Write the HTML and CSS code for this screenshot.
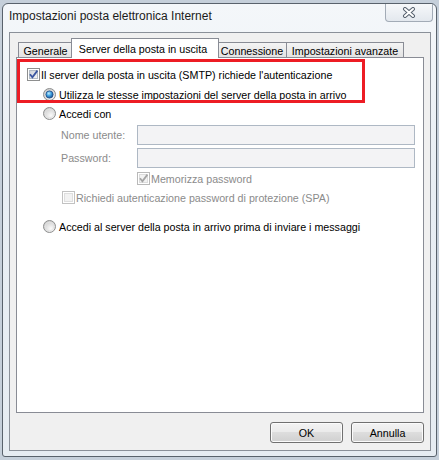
FILE: index.html
```html
<!DOCTYPE html>
<html lang="it">
<head>
<meta charset="utf-8">
<title>Impostazioni posta elettronica Internet</title>
<link rel="stylesheet" href="styles.css">
</head>
<body>
<svg class="defs" width="0" height="0" aria-hidden="true">
  <defs>
    <linearGradient id="cbfill" x1="0" y1="0" x2="1" y2="1">
      <stop offset="0" stop-color="#cdd2d9"/>
      <stop offset="1" stop-color="#f7f7f7"/>
    </linearGradient>
    <radialGradient id="rfill" cx="0.62" cy="0.68" r="0.75">
      <stop offset="0" stop-color="#fbfbfb"/>
      <stop offset="1" stop-color="#c9c9c9"/>
    </radialGradient>
    <radialGradient id="rdot" cx="0.4" cy="0.35" r="0.75">
      <stop offset="0" stop-color="#c4f0ff"/>
      <stop offset="0.45" stop-color="#3d9fe0"/>
      <stop offset="1" stop-color="#173f7a"/>
    </radialGradient>
    <symbol id="cb-on" viewBox="0 0 13 13">
      <rect x="0.5" y="0.5" width="12" height="12" fill="#fff" stroke="#8e8f8f"/>
      <rect x="2.5" y="2.5" width="8" height="8" fill="url(#cbfill)" stroke="#b4bcc6"/>
      <path d="M3 6.3 L5.4 9.3 L10.4 2.6" fill="none" stroke="#3b56a0" stroke-width="1.8"/>
    </symbol>
    <symbol id="cb-dis-on" viewBox="0 0 13 13">
      <rect x="0.5" y="0.5" width="12" height="12" fill="#fff" stroke="#b9b9b9"/>
      <rect x="2.5" y="2.5" width="8" height="8" fill="#f2f2f2" stroke="#dcdcdc"/>
      <path d="M3 6.3 L5.4 9.3 L10.4 2.6" fill="none" stroke="#a4a4a4" stroke-width="1.8"/>
    </symbol>
    <symbol id="cb-dis-off" viewBox="0 0 13 13">
      <rect x="0.5" y="0.5" width="12" height="12" fill="#fff" stroke="#c2c2c2"/>
      <rect x="2.5" y="2.5" width="8" height="8" fill="#f2f2f2" stroke="#dedede"/>
    </symbol>
    <symbol id="rb-on" viewBox="0 0 13 13">
      <circle cx="6.5" cy="6.5" r="6" fill="url(#rfill)" stroke="#8e8f8f"/>
      <circle cx="6.5" cy="6.5" r="3.6" fill="url(#rdot)" stroke="#1d4b86" stroke-width="0.8"/>
    </symbol>
    <symbol id="rb-off" viewBox="0 0 13 13">
      <circle cx="6.5" cy="6.5" r="6" fill="url(#rfill)" stroke="#8e8f8f"/>
      <circle cx="6.5" cy="6.5" r="4.2" fill="none" stroke="#e2e2e2" stroke-width="0.8"/>
    </symbol>
  </defs>
</svg>

<div class="window">
  <div class="titlebar">
    <span class="title">Impostazioni posta elettronica Internet</span>
    <div class="close">
      <svg width="14" height="11" viewBox="0 0 14 11">
        <path d="M3 2 L11 9 M11 2 L3 9" stroke="#56616e" stroke-width="4" stroke-linecap="round"/>
        <path d="M3 2 L11 9 M11 2 L3 9" stroke="#ffffff" stroke-width="2" stroke-linecap="round"/>
      </svg>
    </div>
  </div>

  <div class="client">
    <div class="tabs">
      <div class="tab t-gen">Generale</div>
      <div class="tab active">Server della posta in uscita</div>
      <div class="tab t-conn">Connessione</div>
      <div class="tab t-adv">Impostazioni avanzate</div>
    </div>

    <div class="panel">
      <div class="highlight"></div>

      <div class="row">
        <svg class="ctl"><use href="#cb-on"/></svg>
        <span class="txt gap1">Il server della posta in uscita (SMTP) richiede l'autenticazione</span>
      </div>

      <div class="row ind-radio r2">
        <svg class="ctl"><use href="#rb-on"/></svg>
        <span class="txt gap3">Utilizza le stesse impostazioni del server della posta in arrivo</span>
      </div>

      <div class="row ind-radio r3">
        <svg class="ctl"><use href="#rb-off"/></svg>
        <span class="txt gap3">Accedi con</span>
      </div>

      <div class="row frow r4">
        <span class="lbl">Nome utente:</span>
        <div class="field"></div>
      </div>

      <div class="row frow r5">
        <span class="lbl">Password:</span>
        <div class="field"></div>
      </div>

      <div class="row ind-mem r6">
        <svg class="ctl"><use href="#cb-dis-on"/></svg>
        <span class="txt gap1 dis">Memorizza password</span>
      </div>

      <div class="row ind-spa r7">
        <svg class="ctl"><use href="#cb-dis-off"/></svg>
        <span class="txt gap1 dis">Richiedi autenticazione password di protezione (SPA)</span>
      </div>

      <div class="row ind-radio r8">
        <svg class="ctl"><use href="#rb-off"/></svg>
        <span class="txt gap3">Accedi al server della posta in arrivo prima di inviare i messaggi</span>
      </div>
    </div>

    <div class="buttons">
      <button class="btn" type="button">OK</button>
      <button class="btn" type="button">Annulla</button>
    </div>
  </div>
</div>
</body>
</html>
```
FILE: styles.css
```css
* {
  box-sizing: border-box;
}

html,
body {
  margin: 0;
  padding: 0;
}

body {
  width: 439px;
  height: 460px;
  overflow: hidden;
  background: #c5cfda;
  font-family: "Liberation Sans", Arial, sans-serif;
  font-size: 10.7px;
  color: #000;
}

.defs {
  position: absolute;
  width: 0;
  height: 0;
  overflow: hidden;
}

.window {
  margin: 3px 0 0 2px;
  width: 435px;
  height: 454px;
  border: 1px solid #59626c;
  border-radius: 6px 6px 3px 3px;
  background: linear-gradient(180deg, #f4f7fa 0%, #e8eef4 40%, #e6ecf2 100%);
  display: flex;
  flex-direction: column;
}

.titlebar {
  height: 28px;
  display: flex;
  align-items: flex-start;
  padding-left: 6px;
}

.title {
  font-size: 12px;
  line-height: 16px;
  margin-top: 4px;
  color: #1b1b1b;
}

.close {
  margin-left: auto;
  margin-right: 3px;
  width: 48px;
  height: 18px;
  border: 1px solid #a2abb6;
  border-top: none;
  border-radius: 0 0 4px 4px;
  background: linear-gradient(180deg, #f6f8fa, #e3e8ee);
  display: flex;
  justify-content: center;
  align-items: center;
}

.client {
  margin-left: 6px;
  width: 422px;
  height: 419px;
  border: 1px solid #8a9099;
  background: #f0f0f0;
  display: flex;
  flex-direction: column;
}

.tabs {
  display: flex;
  align-items: flex-end;
  height: 20px;
  margin: 5px 0 -1px 8px;
}

.tab {
  height: 15px;
  margin-bottom: 1px;
  padding-top: 1px;
  border: 1px solid #898c95;
  border-bottom: none;
  background: linear-gradient(180deg, #f4f4f4, #e3e3e3);
  display: flex;
  justify-content: center;
  align-items: center;
  white-space: nowrap;
}

.t-gen {
  width: 55px;
}

.tab.active {
  width: 148px;
  height: 20px;
  margin: 0 -2px;
  padding: 0 4px 0 0;
  background: #fff;
  position: relative;
  z-index: 2;
}

.t-conn {
  width: 70px;
}

.t-adv {
  width: 118px;
  margin-left: -1px;
}

.panel {
  position: relative;
  margin: 0 6px;
  height: 356px;
  border: 1px solid #898c95;
  background: #fff;
  padding: 10px 0 0 10px;
  display: flex;
  flex-direction: column;
}

.highlight {
  position: absolute;
  left: 0;
  top: 1px;
  width: 348px;
  height: 44px;
  border: 3px solid #ed1c24;
}

.row {
  display: flex;
  align-items: center;
  height: 13px;
  white-space: nowrap;
}

.ctl {
  width: 13px;
  height: 13px;
  flex: none;
}

.gap1 {
  margin-left: 1px;
}

.gap3 {
  margin-left: 3px;
}

.dis {
  color: #8b8b8b;
}

.ind-radio {
  padding-left: 16px;
}

.ind-mem {
  padding-left: 110px;
}

.ind-spa {
  padding-left: 35px;
}

.frow {
  height: 20px;
  padding-left: 34px;
}

.lbl {
  width: 76px;
  color: #8b8b8b;
}

.field {
  width: 278px;
  height: 20px;
  border: 1px solid #aeb8c4;
  background: #f3f3f5;
}

.r2 { margin-top: 7px; }
.r3 { margin-top: 6px; }
.r4 { margin-top: 5px; }
.r5 { margin-top: 3px; }
.r6 { margin-top: 4px; }
.r7 { margin-top: 6px; }
.r8 { margin-top: 16px; }

.buttons {
  display: flex;
  justify-content: flex-end;
  gap: 8px;
  margin-top: 9px;
  padding-right: 6px;
}

.btn {
  width: 73px;
  height: 21px;
  padding: 0;
  border: 1px solid #707070;
  border-radius: 3px;
  background: linear-gradient(180deg, #f3f3f3 0%, #ebebeb 45%, #dddddd 50%, #d0d0d0 100%);
  box-shadow: inset 0 0 0 1px #fbfbfb;
  font: inherit;
  color: #000;
}
```
